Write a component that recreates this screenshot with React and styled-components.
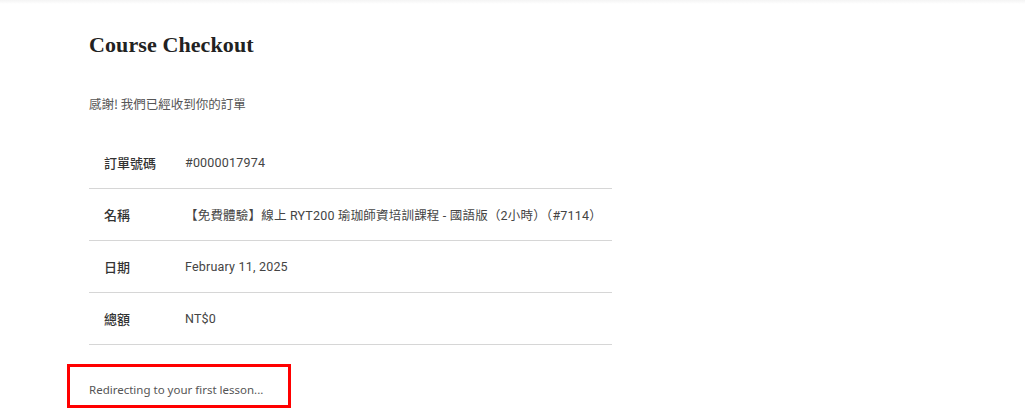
import React from "react";
import styled, { createGlobalStyle } from "styled-components";

const GlobalStyle = createGlobalStyle`
  * { box-sizing: border-box; }
  body {
    margin: 0;
    background: #fff;
    font-family: "Noto Sans", "Noto Sans CJK TC", sans-serif;
  }
`;

const rows = [
  { label: "訂單號碼", value: "#0000017974" },
  { label: "名稱", value: "【免費體驗】線上 RYT200 瑜珈師資培訓課程 - 國語版（2小時）（#7114）" },
  { label: "日期", value: "February 11, 2025" },
  { label: "總額", value: "NT$0" },
];

const App = () => {
  return (
    <>
      <GlobalStyle />
      <TopShade />
      <Page>
        <Title>Course Checkout</Title>
        <Thanks>感謝! 我們已經收到你的訂單</Thanks>
        <OrderTable>
          {rows.map((r) => (
            <Row key={r.label}>
              <Label>{r.label}</Label>
              <Value>{r.value}</Value>
            </Row>
          ))}
        </OrderTable>
        <Highlight>
          <Redirect>Redirecting to your first lesson...</Redirect>
        </Highlight>
      </Page>
    </>
  );
};

export default App;

const TopShade = styled.div`
  height: 4px;
  background: linear-gradient(#f4f4f4, #fff);
`;

const Page = styled.div`
  padding: 27px 0 0 89px;
`;

const Title = styled.h1`
  margin: 0;
  font-family: "Liberation Serif", "DejaVu Serif", serif;
  font-weight: 700;
  font-size: 22px;
  line-height: 28px;
  color: #222;
  letter-spacing: 0.1px;
`;

const Thanks = styled.p`
  margin: 36px 0 0;
  font-size: 12.5px;
  line-height: 18px;
  color: #555;
  font-family: "Noto Sans CJK TC", "Noto Sans", sans-serif;
`;

const OrderTable = styled.div`
  margin-top: 24px;
  width: 523px;
  display: flex;
  flex-direction: column;
`;

const Row = styled.div`
  display: grid;
  grid-template-columns: 81px 1fr;
  align-items: center;
  height: 52px;
  padding-left: 15px;
  border-bottom: 1px solid #d6d6d6;
`;

const Label = styled.div`
  font-family: "Noto Sans CJK TC", "Noto Sans", sans-serif;
  font-weight: 500;
  font-size: 13px;
  color: #333;
`;

const Value = styled.div`
  font-family: Roboto, "Noto Sans CJK TC", sans-serif;
  font-size: 12.5px;
  color: #444;
  white-space: nowrap;
  letter-spacing: 0.2px;
`;

const Highlight = styled.div`
  margin: 19px 0 0 -22px;
  width: 224px;
  height: 44px;
  border: 3px solid #ff0000;
  padding: 15px 0 0 19px;
`;

const Redirect = styled.p`
  margin: 0;
  font-size: 11.5px;
  line-height: 16px;
  color: #555;
  white-space: nowrap;
`;
